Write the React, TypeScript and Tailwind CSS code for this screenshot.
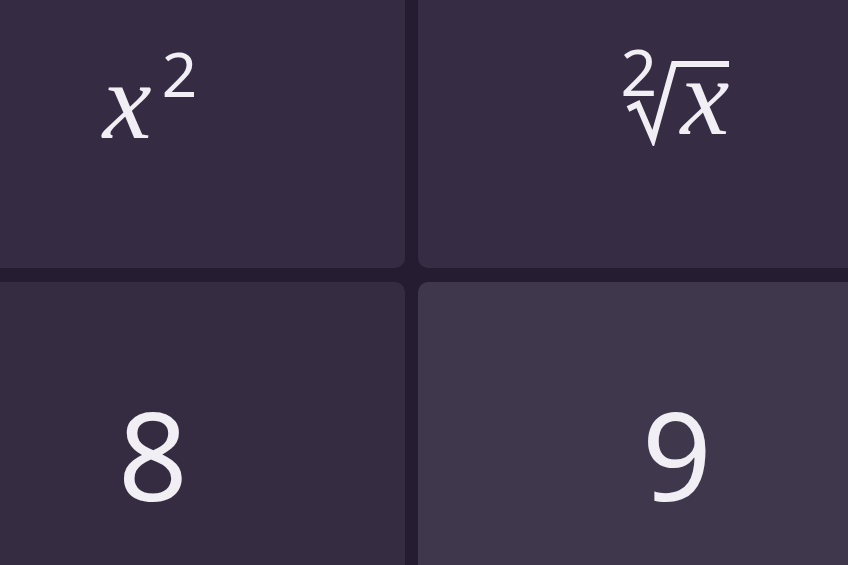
const cell = "flex items-center justify-center rounded-[10px] text-[#f1eff4]";

export default function App() {
  return (
    <div className="w-[848px] h-[565px] overflow-hidden bg-[#251c32]">
      <div className="-ml-[105px] -mt-[84px] grid grid-cols-[510px_510px] grid-rows-[352px_352px] gap-x-[13px] gap-y-[14px]">
        {/* x squared */}
        <div className={`${cell} bg-[#352c43]`}>
          <div className="flex items-start pt-[16px]">
            <span className="font-['Liberation_Serif',serif] italic text-[110px] leading-none mt-[2px]">
              x
            </span>
            <span className="font-['Noto_Sans',sans-serif] text-[62px] leading-none mt-[-2px] ml-[10px]">
              2
            </span>
          </div>
        </div>

        {/* square root */}
        <div className={`${cell} bg-[#362d45]`}>
          <div className="relative w-[115px] h-[100px] mt-[8px] ml-[4px]">
            <span className="absolute left-[3px] -top-[6px] font-['Noto_Sans',sans-serif] text-[64px] leading-none">
              2
            </span>
            <svg className="absolute inset-0" width="115" height="100" viewBox="0 0 115 100" fill="none">
              <path
                d="M10 63 L20 58 L35 93 L56 18 L111 18"
                stroke="#f1eff4"
                strokeWidth="6"
                strokeLinejoin="miter"
              />
            </svg>
            <span className="absolute left-[63px] -top-[4px] font-['Liberation_Serif',serif] italic text-[110px] leading-none">
              x
            </span>
          </div>
        </div>

        <div className={`${cell} bg-[#352c42]`}>
          <span className="font-['Noto_Sans',sans-serif] text-[122px] leading-none -mt-[8px] ml-[6px]">8</span>
        </div>
        <div className={`${cell} bg-[#3f374c]`}>
          <span className="font-['Noto_Sans',sans-serif] text-[122px] leading-none -mt-[8px] ml-[8px]">9</span>
        </div>
      </div>
    </div>
  );
}
